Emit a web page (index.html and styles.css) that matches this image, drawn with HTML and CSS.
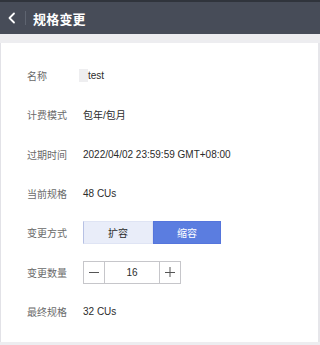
FILE: index.html
```html
<!DOCTYPE html>
<html lang="zh">
<head>
<meta charset="utf-8">
<link rel="stylesheet" href="styles.css">
</head>
<body>
<header class="topbar">
  <svg class="back" width="12" height="14" viewBox="0 0 12 14"><polyline points="8,2.5 3.5,7 8,11.5" fill="none" stroke="#ffffff" stroke-width="1.8" stroke-linecap="round" stroke-linejoin="round"/></svg>
  <span class="divider"></span>
  <h1 class="title">规格变更</h1>
</header>
<div class="band"></div>
<main class="card">
  <div class="row"><span class="label">名称</span><span class="value"><span class="mask"></span>test</span></div>
  <div class="row"><span class="label">计费模式</span><span class="value">包年/包月</span></div>
  <div class="row"><span class="label">过期时间</span><span class="value">2022/04/02 23:59:59 GMT+08:00</span></div>
  <div class="row"><span class="label">当前规格</span><span class="value">48 CUs</span></div>
  <div class="row"><span class="label">变更方式</span>
    <div class="seg">
      <span class="seg-btn">扩容</span>
      <span class="seg-btn active">缩容</span>
    </div>
  </div>
  <div class="row"><span class="label">变更数量</span>
    <div class="stepper">
      <span class="step minus"><span class="hbar"></span></span>
      <span class="num">16</span>
      <span class="step plus"><span class="hbar"></span><span class="vbar"></span></span>
    </div>
  </div>
  <div class="row"><span class="label">最终规格</span><span class="value">32 CUs</span></div>
</main>
</body>
</html>
```

FILE: styles.css
```css
* { box-sizing: border-box; }
html, body { margin: 0; padding: 0; }
body {
  min-height: 345px;
  background: #ededf0;
  font-family: "Liberation Sans", "Noto Sans CJK SC", sans-serif;
  font-size: 10px;
  overflow: hidden;
}
.topbar {
  height: 34px;
  background: #474c58;
  border-top: 2px solid #30343c;
  display: flex;
  align-items: center;
  padding-left: 6px;
}
.back { display: block; }
.divider {
  width: 1px;
  height: 14px;
  background: #5e6470;
  margin-left: 7px;
  margin-right: 7px;
}
.title {
  margin: 0;
  color: #ffffff;
  font-family: "Noto Sans CJK SC", sans-serif;
  font-size: 13px;
  font-weight: 700;
  letter-spacing: 0.2px;
}
.band { height: 9px; }
.card {
  background: #ffffff;
  border-left: 1px solid #e2e2e7;
  border-right: 2px solid #e6e6ea;
  height: 299px;
  padding: 13px 0 0 26px;
}
.row {
  height: 39.33px;
  display: flex;
  align-items: center;
}
.label {
  width: 56px;
  color: #6a6a6a;
  flex: none;
}
.value { color: #2b2b2b; display: flex; align-items: center; }
.mask {
  display: inline-block;
  width: 9px;
  height: 13px;
  background: #eeeef0;
  margin-left: -4px;
}
.seg {
  display: flex;
  height: 23px;
}
.seg-btn {
  display: flex;
  align-items: center;
  justify-content: center;
  width: 70px;
  background: #e9edf9;
  color: #2b2b2b;
  border: 1px solid #dfe4f4;
  border-left-color: #b7c1e4;
}
.seg-btn.active {
  width: 68px;
  background: #5b7de0;
  color: #ffffff;
  border-color: #5575dc;
}
.stepper {
  display: flex;
  height: 23px;
  border: 1px solid #c6c6ca;
}
.step {
  width: 21px;
  position: relative;
  display: flex;
  align-items: center;
  justify-content: center;
}
.minus { border-right: 1px solid #c6c6ca; }
.plus { border-left: 1px solid #c6c6ca; }
.hbar {
  width: 10px;
  height: 1px;
  background: #555;
}
.vbar {
  position: absolute;
  width: 1px;
  height: 10px;
  background: #555;
  left: 50%;
  top: 50%;
  transform: translate(-50%, -50%);
}
.num {
  width: 54px;
  display: flex;
  align-items: center;
  justify-content: center;
  color: #2b2b2b;
}
```
